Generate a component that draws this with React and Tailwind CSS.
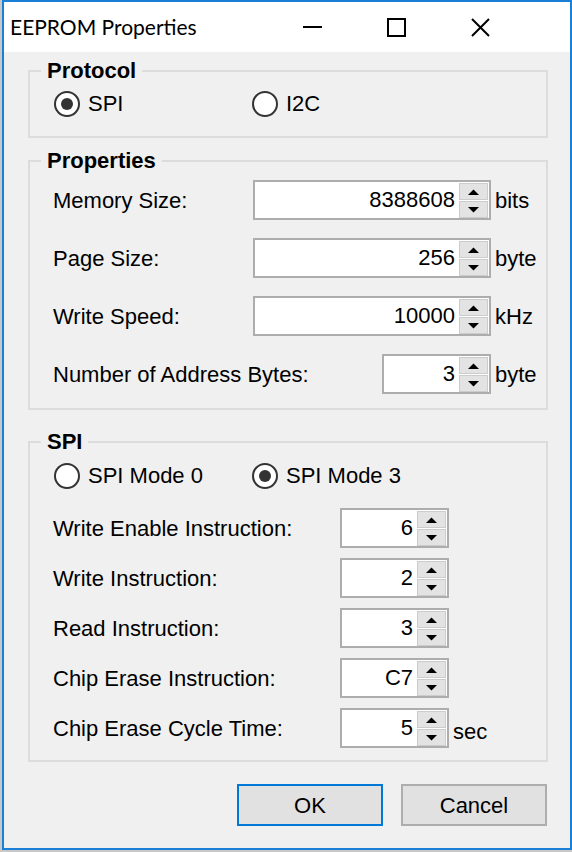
import React from "react";

const Radio = ({ label, checked }) => (
  <div className="flex items-center w-[198px] h-[26px]">
    <div className="w-[26px] h-[26px] rounded-full border-2 border-[#333333] bg-white flex items-center justify-center">
      {checked && <div className="w-[12px] h-[12px] rounded-full bg-[#333333]" />}
    </div>
    <span className="ml-[8px] leading-[26px]">{label}</span>
  </div>
);

const Arrow = ({ down }) => (
  <svg width="11" height="6" viewBox="0 0 11 6">
    {down ? <polygon points="0,0 11,0 5.5,5.5" fill="#000" /> : <polygon points="0,6 11,6 5.5,0.5" fill="#000" />}
  </svg>
);

const Spin = ({ value, width }) => (
  <div className={`${width} h-[40px] border-2 border-[#adadad] bg-white flex`}>
    <div className="flex-1 text-right pr-[4px] leading-[36px]">{value}</div>
    <div className="w-[29px] mr-[1px] pt-[1px] flex flex-col gap-[1px]">
      <div className="h-[17px] bg-[#e3e3e3] border border-[#cccccc] flex items-center justify-center">
        <Arrow />
      </div>
      <div className="h-[17px] bg-[#e3e3e3] border border-[#cccccc] flex items-center justify-center">
        <Arrow down />
      </div>
    </div>
  </div>
);

const Group = ({ title, children }) => (
  <fieldset className="border-2 border-[#dcdcdc] px-[11px]">
    <legend className="px-[6px] font-bold text-[22px] leading-[26px]">{title}</legend>
    {children}
  </fieldset>
);

const PropRow = ({ label, value, unit, width }) => (
  <div className="flex items-center h-[40px]">
    <span className="flex-1 pl-[12px]">{label}</span>
    <Spin value={value} width={width} />
    <span className="w-[44px] pl-[4px]">{unit}</span>
  </div>
);

const SpiRow = ({ label, value, unit }) => (
  <div className="flex items-center h-[40px]">
    <span className="w-[299px] pl-[12px]">{label}</span>
    <Spin value={value} width="w-[109px]" />
    {unit && <span className="ml-[4px] mt-[6px]">{unit}</span>}
  </div>
);

export default function App() {
  return (
    <div className="w-[572px] h-[852px] bg-[#c8c8c8] pl-[2px]">
      <div className="w-[570px] h-[850px] border-2 border-[#1a7fd6] bg-[#f0f0f0] flex flex-col text-black font-['Liberation_Sans',Arial,sans-serif] text-[22px]">
        {/* title bar */}
        <div className="h-[50px] bg-white flex items-center">
          <span className="pl-[6px] flex-1 text-[21px] font-['Lato',sans-serif]">EEPROM Properties</span>
          <div className="flex items-center mr-[48px]">
            <div className="w-[84px] h-[50px] flex items-center justify-center">
              <div className="w-[19px] h-[2px] bg-black" />
            </div>
            <div className="w-[84px] h-[50px] flex items-center justify-center">
              <div className="w-[19px] h-[19px] border-2 border-black" />
            </div>
            <div className="w-[84px] h-[50px] flex items-center justify-center">
              <svg width="19" height="19" viewBox="0 0 19 19">
                <path d="M1 1 L18 18 M18 1 L1 18" stroke="#000" strokeWidth="2" />
              </svg>
            </div>
          </div>
        </div>

        {/* client area */}
        <div className="flex-1 pl-[24px] pr-[22px] pt-[6px] flex flex-col">
          <Group title="Protocol">
            <div className="pt-[7px] pb-[19px] pl-[13px] flex">
              <Radio label="SPI" checked />
              <Radio label="I2C" />
            </div>
          </Group>

          <div className="mt-[10px]">
            <Group title="Properties">
              <div className="pt-[6px] pb-[14px] flex flex-col gap-[18px]">
                <PropRow label="Memory Size:" value="8388608" unit="bits" width="w-[238px]" />
                <PropRow label="Page Size:" value="256" unit="byte" width="w-[238px]" />
                <PropRow label="Write Speed:" value="10000" unit="kHz" width="w-[238px]" />
                <PropRow label="Number of Address Bytes:" value="3" unit="byte" width="w-[109px]" />
              </div>
            </Group>
          </div>

          <div className="mt-[19px]">
            <Group title="SPI">
              <div className="pt-[8px] pl-[13px] flex">
                <Radio label="SPI Mode 0" />
                <Radio label="SPI Mode 3" checked />
              </div>
              <div className="pt-[19px] pb-[12px] flex flex-col gap-[10px]">
                <SpiRow label="Write Enable Instruction:" value="6" />
                <SpiRow label="Write Instruction:" value="2" />
                <SpiRow label="Read Instruction:" value="3" />
                <SpiRow label="Chip Erase Instruction:" value="C7" />
                <SpiRow label="Chip Erase Cycle Time:" value="5" unit="sec" />
              </div>
            </Group>
          </div>

          <div className="mt-[22px] flex justify-end gap-[18px] pr-[1px]">
            <button className="w-[146px] h-[42px] border-2 border-[#0078d7] bg-[#e1e1e1]">OK</button>
            <button className="w-[146px] h-[42px] border-2 border-[#adadad] bg-[#e1e1e1]">Cancel</button>
          </div>
        </div>
      </div>
    </div>
  );
}
